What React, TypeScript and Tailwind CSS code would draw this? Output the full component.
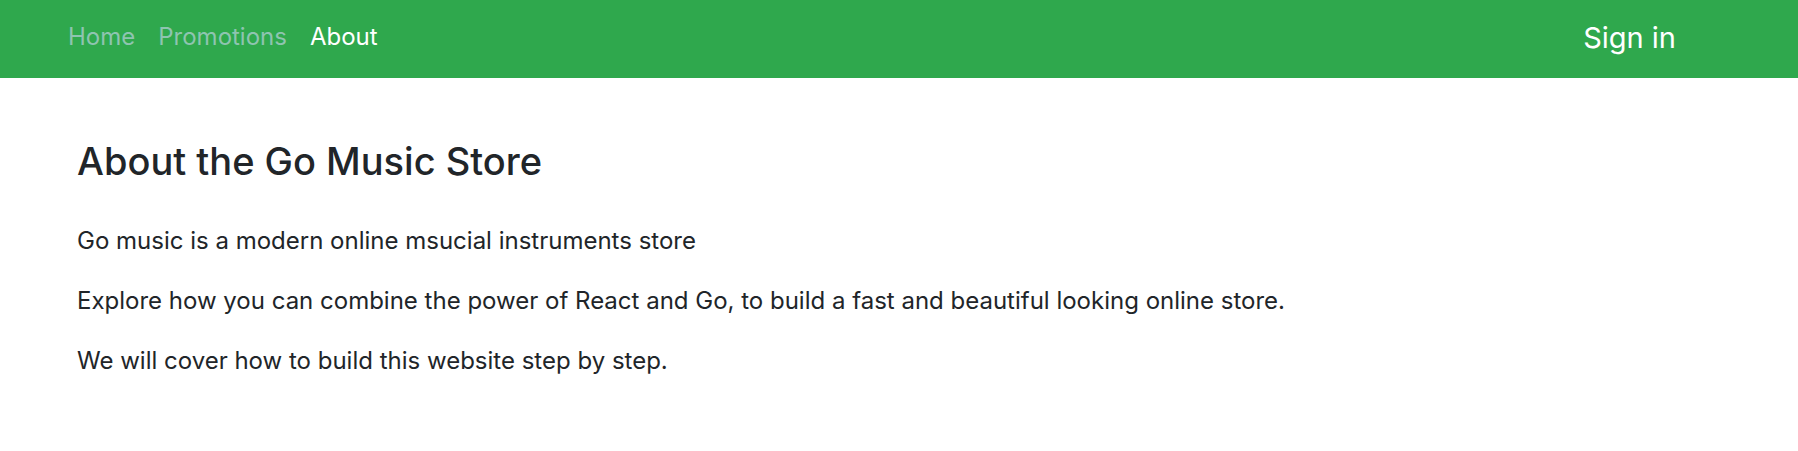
import React from 'react';

const navLinks = [
  { label: 'Home', active: false },
  { label: 'Promotions', active: false },
  { label: 'About', active: true },
];

function Navbar() {
  return (
    <nav className="flex h-[78px] items-center justify-between bg-[#2fa84d] pl-[68px] pr-[122px]">
      <ul className="flex items-center gap-[23px] pb-[3px]">
        {navLinks.map((link) => (
          <li key={link.label}>
            <a
              href="#"
              className={
                link.active
                  ? 'text-[24px] leading-none text-white'
                  : 'text-[24px] leading-none text-[#8ec4b0]'
              }
            >
              {link.label}
            </a>
          </li>
        ))}
      </ul>
      <button className="pb-[4px] text-[29px] leading-none text-white">Sign in</button>
    </nav>
  );
}

export default function App() {
  return (
    <div className="min-h-[451px] bg-white font-['Inter','Liberation_Sans',sans-serif] text-[#212529]">
      <Navbar />
      <main className="pl-[77px] pt-[61px]">
        <h1 className="mb-[39px] text-[38px] font-medium leading-[45px]">
          About the Go Music Store
        </h1>
        <p className="mb-[24px] text-[24px] leading-[36px]">
          Go music is a modern online msucial instruments store
        </p>
        <p className="mb-[24px] text-[24px] leading-[36px]">
          Explore how you can combine the power of React and Go, to build a fast and beautiful looking online store.
        </p>
        <p className="mb-[24px] text-[24px] leading-[36px]">
          We will cover how to build this website step by step.
        </p>
      </main>
    </div>
  );
}
